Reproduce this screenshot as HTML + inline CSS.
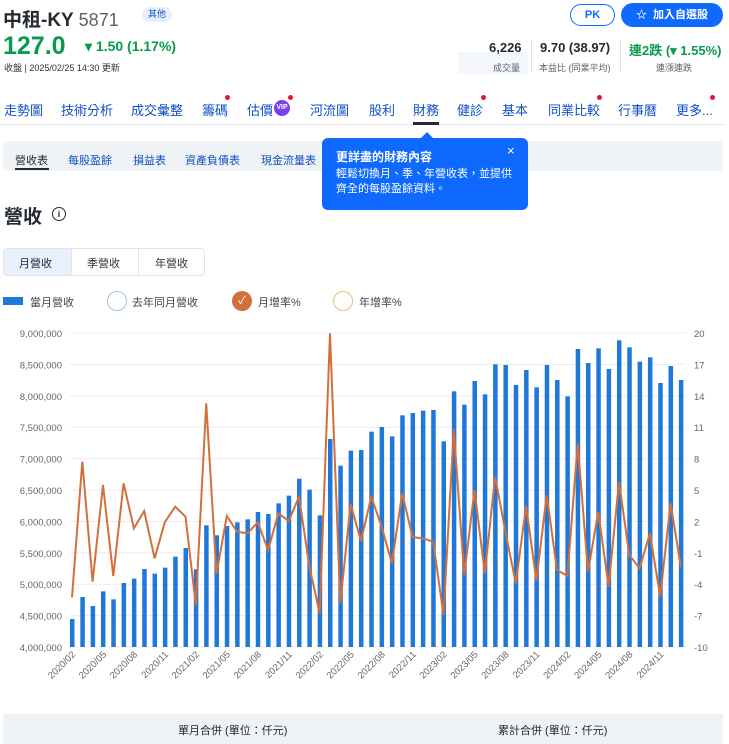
<!DOCTYPE html>
<html><head><meta charset="utf-8"><style>
*{margin:0;padding:0;box-sizing:border-box}
body{width:729px;height:744px;overflow:hidden;background:#fff;font-family:"Liberation Sans","Noto Sans CJK TC",sans-serif;color:#232a31;position:relative}
.a{position:absolute;white-space:nowrap}
.g{color:#0b9a4d}
.nav span{position:absolute;top:100px;font-size:13px;color:#0f4fc6}
.dot{position:absolute;width:5px;height:5px;border-radius:50%;background:#e0173a}
.sub{position:absolute;top:152px;font-size:11px;color:#0f4fc6}
</style></head><body>
<div class="a" style="left:3px;top:5px;font-size:19px;font-weight:bold">中租-KY <span style="font-weight:normal;color:#5b636a;font-size:18px">5871</span></div>
<div class="a" style="left:142px;top:7px;width:30px;height:15px;border-radius:8px;background:#e8f0fd;color:#0f4fc6;font-size:9px;text-align:center;line-height:15px">其他</div>
<div class="a" style="left:570px;top:4px;width:45px;height:22px;border:1px solid #0f69ff;border-radius:11px;color:#0f69ff;font-size:11px;font-weight:bold;text-align:center;line-height:20px">PK</div>
<div class="a" style="left:621px;top:3px;width:102px;height:24px;background:#0f69ff;border-radius:12px;color:#fff;font-size:11px;font-weight:bold;text-align:center;line-height:24px">☆&nbsp; 加入自選股</div>
<div class="a g" style="left:3px;top:32px;font-size:25px;font-weight:bold">127.0</div>
<div class="a g" style="left:85px;top:38px;font-size:14px;font-weight:bold">▾ 1.50 (1.17%)</div>
<div class="a" style="left:4px;top:61px;font-size:9px;color:#333">收盤 | 2025/02/25 14:30 更新</div>
<div class="a" style="left:458px;top:52px;width:70px;height:22px;background:#f3f6fb"></div>
<div class="a" style="left:489px;top:40px;font-size:13px;font-weight:bold">6,226</div>
<div class="a" style="left:493px;top:61px;font-size:9px;color:#5b636a">成交量</div>
<div class="a" style="left:531px;top:40px;width:1px;height:32px;background:#e0e4e9"></div>
<div class="a" style="left:540px;top:40px;font-size:13px;font-weight:bold">9.70 (38.97)</div>
<div class="a" style="left:539px;top:61px;font-size:9px;color:#5b636a">本益比 (同業平均)</div>
<div class="a" style="left:620px;top:40px;width:1px;height:32px;background:#e0e4e9"></div>
<div class="a g" style="left:629px;top:40px;font-size:13px;font-weight:bold">連2跌 (▾ 1.55%)</div>
<div class="a" style="left:656px;top:61px;font-size:9px;color:#5b636a">連漲連跌</div>
<div class="nav">
<span style="left:4px">走勢圖</span><span style="left:61px">技術分析</span><span style="left:131px">成交彙整</span><span style="left:202px">籌碼</span><span style="left:247px">估價</span><span style="left:310px">河流圖</span><span style="left:369px">股利</span><span style="left:413px">財務</span><span style="left:457px">健診</span><span style="left:502px">基本</span><span style="left:548px">同業比較</span><span style="left:618px">行事曆</span><span style="left:676px">更多...</span>
</div>
<div class="a" style="left:274px;top:100px;width:16px;height:16px;border-radius:50%;background:#7b3ff2;color:#fff;font-size:7px;font-weight:bold;text-align:center;line-height:16px">VIP</div>
<div class="dot" style="left:225px;top:95px"></div><div class="dot" style="left:288px;top:95px"></div><div class="dot" style="left:481px;top:95px"></div><div class="dot" style="left:597px;top:95px"></div><div class="dot" style="left:710px;top:95px"></div>
<div class="a" style="left:0;top:124px;width:724px;height:1px;background:#e0e4e9"></div>
<div class="a" style="left:413px;top:122px;width:26px;height:3px;background:#232a31"></div>
<div class="a" style="left:3px;top:141px;width:720px;height:30px;background:#f0f3f5;border-radius:4px"></div>
<div class="sub" style="left:15px;color:#232a31">營收表</div><div class="a" style="left:15px;top:168px;width:34px;height:2px;background:#232a31"></div>
<div class="sub" style="left:68px">每股盈餘</div><div class="sub" style="left:133px">損益表</div><div class="sub" style="left:185px">資產負債表</div><div class="sub" style="left:261px">現金流量表</div>
<div class="a" style="left:322px;top:138px;width:206px;height:72px;background:#0f69ff;border-radius:6px;color:#fff">
<div class="a" style="left:14px;top:10px;font-size:12px;font-weight:bold">更詳盡的財務內容</div>
<div class="a" style="left:185px;top:5px;font-size:13px">×</div>
<div class="a" style="left:14px;top:29px;font-size:11px;line-height:15px">輕鬆切換月、季、年營收表，並提供<br>齊全的每股盈餘資料。</div>
</div>
<div class="a" style="left:421px;top:132px;width:0;height:0;border-left:6px solid transparent;border-right:6px solid transparent;border-bottom:6px solid #0f69ff"></div>
<div class="a" style="left:4px;top:202px;font-size:19px;font-weight:bold">營收</div>
<div class="a" style="left:52px;top:207px;width:14px;height:14px;border:1.3px solid #232a31;border-radius:50%;font-size:9px;text-align:center;line-height:12px;font-weight:bold">i</div>
<div class="a" style="left:3px;top:248px;width:202px;height:28px;border:1px solid #e0e4e9;border-radius:4px"></div>
<div class="a" style="left:4px;top:249px;width:67px;height:26px;background:#e8f0fd"></div>
<div class="a" style="left:138px;top:249px;width:1px;height:26px;background:#e0e4e9"></div>
<div class="a" style="left:71px;top:249px;width:1px;height:26px;background:#e0e4e9"></div>
<div class="a" style="left:19px;top:255px;font-size:11px">月營收</div>
<div class="a" style="left:87px;top:255px;font-size:11px;color:#333">季營收</div>
<div class="a" style="left:155px;top:255px;font-size:11px;color:#333">年營收</div>
<div class="a" style="left:3px;top:297px;width:20px;height:8px;background:#1f78d8"></div>
<div class="a" style="left:30px;top:294px;font-size:11px;color:#444">當月營收</div>
<div class="a" style="left:107px;top:291px;width:20px;height:20px;border:1px solid #9ec0e4;border-radius:50%"></div>
<div class="a" style="left:132px;top:294px;font-size:11px;color:#444">去年同月營收</div>
<div class="a" style="left:232px;top:291px;width:20px;height:20px;background:#d36f3a;border-radius:50%;color:#fff;font-size:11px;text-align:center;line-height:20px">✓</div>
<div class="a" style="left:258px;top:294px;font-size:11px;color:#444">月增率%</div>
<div class="a" style="left:333px;top:291px;width:20px;height:20px;border:1px solid #e3c16a;border-radius:50%"></div>
<div class="a" style="left:359px;top:294px;font-size:11px;color:#444">年增率%</div>
<svg id="ch" class="a" style="left:0;top:320px" width="729" height="390"></svg>
<div class="a" style="left:3px;top:714px;width:720px;height:30px;background:#f0f3f5"></div>
<div class="a" style="left:178px;top:722px;font-size:11px">單月合併 (單位：仟元)</div>
<div class="a" style="left:498px;top:722px;font-size:11px">累計合併 (單位：仟元)</div>
<script>
var b=[897,831,858,814,838,789,776,747,761,743,710,684,748,616,646,618,607,598,576,582,550,527,476,509,586,357,437,392,390,335,321,349,286,279,272,270,364,214,254,183,223,133,135,195,150,202,135,180,229,87,129,85,147,61,82,125,112,189,138,180];
var l=[832,425,785,495,768,490,625,573,715,606,560,590,855,250,762,588,635,640,607,690,580,603,530,740,880,40,850,552,663,530,620,730,520,652,655,665,885,328,765,510,760,470,635,790,558,782,525,750,768,370,755,575,800,485,705,745,640,830,550,742];
var s='',o=-320;
var L=['9,000,000','8,500,000','8,000,000','7,500,000','7,000,000','6,500,000','6,000,000','5,500,000','5,000,000','4,500,000','4,000,000'];
var R=['20','17','14','11','8','5','2','-1','-4','-7','-10'];
for(var i=0;i<11;i++){var y=333+i*31.4+o;s+='<line x1="70" x2="686" y1="'+y+'" y2="'+y+'" stroke="#ececec"/>';
s+='<text x="62" y="'+(y+4)+'" font-size="9.5" fill="#666" text-anchor="end" font-family="Liberation Sans">'+L[i]+'</text>';
s+='<text x="694" y="'+(y+4)+'" font-size="9.5" fill="#666" font-family="Liberation Sans">'+R[i]+'</text>';}
var pts=[];
for(var i=0;i<60;i++){var x=72+i*10.32;var t=320+b[i]/3+o;s+='<rect x="'+(x-2)+'" y="'+t+'" width="4.5" height="'+(647+o-t)+'" fill="#1f78d8"/>';pts.push(x.toFixed(1)+','+(320+l[i]/3+o).toFixed(1));
if(i%3==0){var yr=2020+Math.floor((i+1)/12),m=(i+1)%12+1;var lab=yr+'/'+(m<10?'0':'')+m;s+='<text transform="translate('+(x+4)+','+(655+o)+') rotate(-45)" font-size="9.5" fill="#666" text-anchor="end" font-family="Liberation Sans">'+lab+'</text>';}}
s+='<polyline points="'+pts.join(' ')+'" fill="none" stroke="#d36f3a" stroke-width="2"/>';
document.getElementById('ch').innerHTML=s;
</script>
</body></html>
